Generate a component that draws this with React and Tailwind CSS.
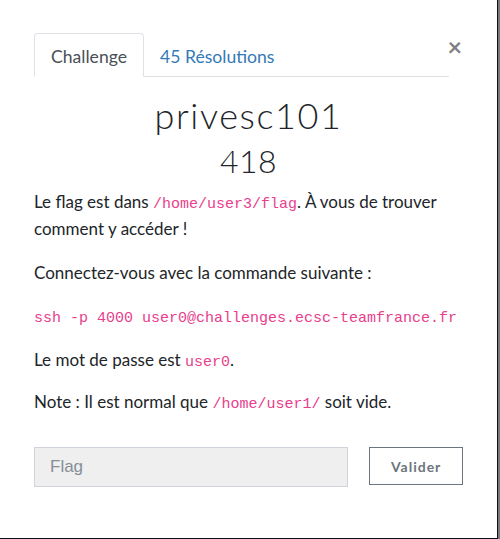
import React, { useState } from "react";

function Code({ children }) {
    return (
        <code className="font-['Liberation_Mono',monospace] text-[15px] leading-none text-[#e83e8c]">
            {children}
        </code>
    );
}

export default function App() {
    const [flag, setFlag] = useState("");

    return (
        <div className="flex h-[539px] w-[500px] bg-[#0d0f1a]">
            <div className="flex h-[538px] w-[497px] flex-col bg-white font-['Lato',sans-serif] text-[#212529]">
                <div className="relative px-[34px] pt-[33px]">
                    <div className="flex w-[415px] border-b border-[#dee2e6]">
                        <div className="-mb-px h-[44px] rounded-t border border-[#dee2e6] border-b-white bg-white px-4 pt-[10px] text-[17.6px] text-[#495057]">
                            Challenge
                        </div>
                        <div className="px-4 pt-[11px] text-[17.6px] text-[#337ab7]">45 Résolutions</div>
                    </div>
                    <button className="absolute right-[35px] top-[34px] text-[25px] font-bold leading-none text-[#808080]">
                        ×
                    </button>
                </div>

                <h3 className="mt-[16px] text-center text-[36px] font-light leading-[44px] tracking-[1.6px]">
                    privesc101
                </h3>
                <h4 className="mt-[6px] text-center text-[32px] font-light leading-[36px] tracking-[0.5px]">418</h4>

                <div className="mt-[9px] px-[34px] text-[17px] leading-[27px]">
                    <p>
                        Le flag est dans <Code>/home/user3/flag</Code>. À vous de trouver comment y accéder !
                    </p>
                    <p className="mt-[17px]">Connectez-vous avec la commande suivante :</p>
                    <p className="mt-[16px]">
                        <Code>ssh -p 4000 user0@challenges.ecsc-teamfrance.fr</Code>
                    </p>
                    <p className="mt-[17px]">
                        <span>Le mot de passe est </span>
                        <Code>user0</Code>.
                    </p>
                    <p className="mt-[15px]">
                        <span>Note : Il est normal que </span>
                        <Code>/home/user1/</Code> soit vide.
                    </p>
                </div>

                <div className="mt-[32px] flex items-start px-[34px]">
                    <input
                        value={flag}
                        onChange={(e) => setFlag(e.target.value)}
                        placeholder="Flag"
                        className="h-[40px] w-[315px] border border-[#ced4da] bg-[#efefef] px-[15px] font-['Liberation_Sans',sans-serif] text-[17px] text-[#495057] placeholder:text-[#868e96] focus:outline-none"
                    />
                    <button className="ml-[21px] h-[38px] w-[94px] border border-[#6c757d] text-[14px] font-bold tracking-[1px] text-[#6c757d]">
                        Valider
                    </button>
                </div>
            </div>
            <div className="h-[539px] w-[3px] border-l border-[#0d0f1a] bg-[#7a7a7a]" />
        </div>
    );
}
